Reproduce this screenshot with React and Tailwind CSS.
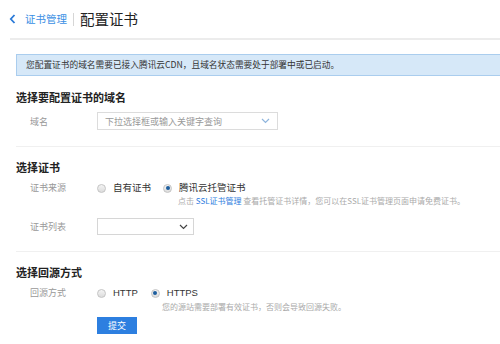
import React from "react";

const font = { fontFamily: '"Noto Sans CJK SC", "Noto Sans", sans-serif' };

function Radio({ checked }) {
  return (
    <span className="w-[9px] h-[9px] rounded-full border border-[#c4c4c4] bg-gradient-to-b from-[#f4f4f4] to-[#dcdcdc] flex items-center justify-center shrink-0">
      {checked && <span className="w-[4px] h-[4px] rounded-full bg-[#1d5e9e]" />}
    </span>
  );
}

function Chevron({ className }) {
  return (
    <svg className={className} width="9" height="6" viewBox="0 0 9 6" fill="none">
      <path d="M1 1l3.5 3.5L8 1" stroke="currentColor" strokeWidth="1.2" />
    </svg>
  );
}

export default function App() {
  return (
    <div className="w-[500px] h-[344px] bg-white overflow-hidden text-[#333]" style={font}>
      {/* header */}
      <div className="h-[38px] flex items-center pl-[9px]">
        <svg width="7" height="10" viewBox="0 0 7 10" fill="none" className="text-[#2a7ad8]">
          <path d="M5.5 1L1.8 5l3.7 4" stroke="currentColor" strokeWidth="1.8" />
        </svg>
        <span className="ml-[9px] text-[10.5px] text-[#3b8fe4] leading-none">证书管理</span>
        <span className="ml-[6px] w-px h-[13px] bg-[#d6d6d6]" />
        <span className="ml-[6px] text-[14.5px] text-[#222] leading-none">配置证书</span>
      </div>
      <div className="ml-[10px] h-[2px] bg-[#ececec]" />

      <div className="pl-[16px]">
        {/* info */}
        <div className="mt-[14px] h-[22px] border border-r-0 border-[#aacdee] bg-[#d6e8f8] flex items-center pl-[9px] text-[8.7px] text-[#333] leading-none">
          您配置证书的域名需要已接入腾讯云CDN，且域名状态需要处于部署中或已启动。
        </div>

        {/* section 1 */}
        <div className="mt-[14px] text-[11px] font-bold text-[#222] leading-[14px]">选择要配置证书的域名</div>
        <div className="mt-[8px] flex items-center">
          <div className="w-[81px] pl-[14px] text-[9px] text-[#999] leading-none">域名</div>
          <div className="w-[181px] h-[18px] border border-[#dcdcdc] flex items-center justify-between pl-[7px] pr-[7px]">
            <span className="text-[9px] text-[#999] leading-none">下拉选择框或输入关键字查询</span>
            <Chevron className="text-[#8fb5dd]" />
          </div>
        </div>
        <div className="mt-[16px] h-px bg-[#f0f0f0]" />

        {/* section 2 */}
        <div className="mt-[13px] text-[11px] font-bold text-[#222] leading-[14px]">选择证书</div>
        <div className="mt-[8px] flex">
          <div className="w-[81px] pl-[14px] text-[9px] text-[#999] leading-[12px]">证书来源</div>
          <div className="flex flex-col">
            <div className="flex items-center h-[12px]">
              <Radio />
              <span className="ml-[7px] text-[9.5px] leading-none">自有证书</span>
              <span className="ml-[12px]"><Radio checked /></span>
              <span className="ml-[7px] text-[9.5px] leading-none">腾讯云托管证书</span>
            </div>
            <div className="mt-[1px] pl-[81px] text-[8px] text-[#aaa] leading-[11px] whitespace-nowrap">
              点击 <span className="text-[#2e7ee0]">SSL证书管理</span> 查看托管证书详情，您可以在SSL证书管理页面申请免费证书。
            </div>
          </div>
        </div>
        <div className="mt-[12px] flex items-center">
          <div className="w-[81px] pl-[14px] text-[9px] text-[#999] leading-none">证书列表</div>
          <div className="w-[97px] h-[17px] border border-[#d6d6d6] flex items-center justify-end pr-[5px]">
            <Chevron className="text-[#444]" />
          </div>
        </div>
        <div className="mt-[16px] h-px bg-[#f0f0f0]" />

        {/* section 3 */}
        <div className="mt-[13px] text-[11px] font-bold text-[#222] leading-[14px]">选择回源方式</div>
        <div className="mt-[8px] flex">
          <div className="w-[81px] pl-[14px] text-[9px] text-[#999] leading-[12px]">回源方式</div>
          <div className="flex flex-col">
            <div className="flex items-center h-[12px]">
              <Radio />
              <span className="ml-[7px] text-[9.5px] leading-none" style={{ fontFamily: '"Liberation Sans", sans-serif' }}>HTTP</span>
              <span className="ml-[13px]"><Radio checked /></span>
              <span className="ml-[7px] text-[9.5px] leading-none" style={{ fontFamily: '"Liberation Sans", sans-serif' }}>HTTPS</span>
            </div>
            <div className="mt-[2px] pl-[65px] text-[8px] text-[#aaa] leading-[11px] whitespace-nowrap">
              您的源站需要部署有效证书，否则会导致回源失败。
            </div>
            <button className="mt-[5px] w-[40px] h-[17px] bg-[#2d7fe0] text-white text-[9px] leading-none flex items-center justify-center">
              提交
            </button>
          </div>
        </div>
      </div>
    </div>
  );
}
